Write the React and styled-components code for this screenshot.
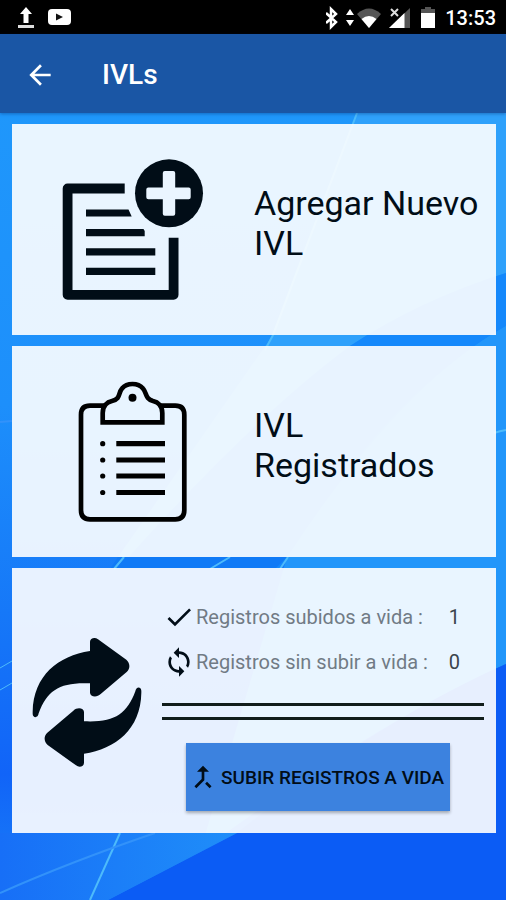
import React from "react";
import styled, { createGlobalStyle } from "styled-components";
import { MdArrowBack, MdCallMerge, MdCheck, MdSync } from "react-icons/md";

const INK = "#010d17";

const GlobalStyle = createGlobalStyle`
  * {
    box-sizing: border-box;
  }

  body {
    margin: 0;
    background: #0b5cf5;
    font-family: Roboto, "Liberation Sans", sans-serif;
  }
`;

const Page = styled.div`
  position: relative;
  z-index: 0;
  min-height: 100vh;
  display: flex;
  flex-direction: column;
`;

const WallpaperSvg = styled.svg`
  position: absolute;
  inset: 0;
  z-index: -1;
  width: 100%;
  height: 100%;
`;

const StatusBar = styled.div`
  display: flex;
  align-items: center;
  justify-content: space-between;
  height: 34px;
  padding: 2px 10px 0 16px;
  background: #000;
  color: #fff;
`;

const StatusGroup = styled.div`
  display: flex;
  align-items: center;
  gap: ${(props) => props.$gap};
`;

const Clock = styled.span`
  font-size: 20px;
  font-weight: 500;
  line-height: 24px;
`;

const Toolbar = styled.header`
  display: flex;
  align-items: center;
  gap: 46px;
  height: 79px;
  padding: 2px 24px 0;
  background: #1a56a5;
  color: #fff;
  box-shadow: 0 1px 3px rgba(0, 40, 110, 0.4);
`;

const BackButton = styled.button`
  display: flex;
  padding: 0;
  border: 0;
  background: none;
  color: inherit;
  font-size: 32px;
`;

const Title = styled.h1`
  margin: 0;
  font-size: 28px;
  font-weight: 500;
  line-height: 32px;
`;

const Content = styled.main`
  display: flex;
  flex-direction: column;
  gap: 11px;
  padding: 11px 10px 11px 12px;
`;

const MenuCard = styled.button`
  display: grid;
  grid-template-columns: 1fr 1fr;
  align-items: center;
  min-height: 211px;
  padding: 0;
  border: 0;
  background: rgba(255, 255, 255, 0.9);
  color: ${INK};
  font-family: inherit;
  text-align: left;
`;

const CardIcon = styled.span`
  display: flex;
  align-items: center;
  justify-content: center;
`;

const CardLabel = styled.span`
  padding: 0 16px 14px 0;
  font-size: 34px;
  line-height: 40px;
`;

const SyncCard = styled.section`
  display: grid;
  grid-template-columns: 150px 1fr;
  padding: 26px 12px 22px 0;
  background: rgba(255, 255, 255, 0.9);
  color: ${INK};
`;

const Stats = styled.dl`
  margin: 0;
`;

const StatRow = styled.div`
  display: flex;
  align-items: center;
  height: 45px;
  padding: 0 24px 0 1px;
  font-size: 20px;

  svg {
    font-size: 32px;
  }
`;

const StatLabel = styled.dt`
  flex: 1;
  margin-left: 1px;
  color: #717b85;
`;

const StatValue = styled.dd`
  margin: 0;
  color: #3b444c;
`;

const Divider = styled.div`
  height: 17px;
  margin: 19px 0 23px;
  border: solid #111d1b;
  border-width: 3px 0;
`;

const UploadButton = styled.button`
  display: flex;
  align-items: center;
  width: 264px;
  height: 68px;
  margin-left: 24px;
  padding: 0 0 0 1px;
  border: 0;
  background: #3c82df;
  box-shadow: 0 2px 3px rgba(0, 0, 0, 0.3);
  color: ${INK};
  font-family: inherit;
  font-size: 19px;
  font-weight: 500;
  white-space: nowrap;

  svg {
    flex: none;
    margin-right: 2px;
    font-size: 32px;
  }
`;

const Wallpaper = () => (
  <WallpaperSvg viewBox="0 0 506 900" preserveAspectRatio="none" aria-hidden="true">
    <defs>
      <linearGradient id="sky" x1="0" y1="0" x2="0" y2="1">
        <stop offset="0.12" stopColor="#1f97fb" />
        <stop offset="0.45" stopColor="#1d8ffb" />
        <stop offset="0.68" stopColor="#1678f8" />
        <stop offset="0.86" stopColor="#1164f8" />
        <stop offset="1" stopColor="#1a80f7" />
      </linearGradient>
      <linearGradient id="wing" x1="0" y1="0" x2="1" y2="0">
        <stop offset="0" stopColor="#176ff7" />
        <stop offset="1" stopColor="#1f8ef9" />
      </linearGradient>
    </defs>
    <rect width="506" height="900" fill="url(#sky)" />
    <path d="M357 113H506V273Q420 300 350 346Q300 385 210 557H118L273 335Z" fill="#2fa1fb" />
    <path d="M506 273Q420 300 350 346Q250 420 118 569H280Q380 400 506 326Z" fill="#1588fb" />
    <path d="M118 557H287L275 569H110Z" fill="#107af6" />
    <path d="M506 326Q400 385 287 557L200 852Q380 720 506 664Z" fill="#2296fa" />
    <path d="M506 664Q380 720 237 833L108 900H506Z" fill="#0b5cf5" />
    <path d="M0 833H237L108 900H0Z" fill="url(#wing)" />
    <g fill="none" stroke="#4dbbfb" strokeWidth="2">
      <path d="M357 113L273 335L265 350" />
      <path d="M124 557L114 569M230 557L210 569M288 557L280 569" />
      <path d="M120 833L90 900" />
      <path d="M506 430Q500 431 494 433" />
      <path d="M0 668L12 661M0 690L12 683" strokeWidth="1" />
      <path d="M0 893Q70 862 155 833M0 422L12 421" stroke="#3292fa" />
    </g>
  </WallpaperSvg>
);

const UploadedIcon = () => (
  <svg width="20" height="24" viewBox="0 0 20 24" fill="#fff">
    <path d="M10 1l6 7h-3.500v9h-5V8H4z" />
    <path d="M2 19h16v3H2z" fill="#ddd" />
  </svg>
);

const VideoIcon = () => (
  <svg width="24" height="24" viewBox="0 0 24 24">
    <rect x="1" y="3" width="23" height="16" rx="4" fill="#fff" />
    <path d="M9 7.500l7 3.500l-7 3.500z" fill="#111" />
  </svg>
);

const StatusIcons = () => (
  <svg width="116" height="24" viewBox="0 0 116 24">
    <path d="M0 7l10 9l-5 5V3l5 5L0 17" fill="none" stroke="#fff" strokeWidth="2.500" />
    <path d="M24 3l4 6h-8zM24 20l4-6h-8z" fill="#fff" />
    <path d="M31 8Q43-3 55 8L43 22z" fill="#555" />
    <path d="M35.500 13Q43 7 50.500 13L43 22z" fill="#fff" />
    <path d="M63 22L84 2v20z" fill="#555" />
    <path d="M63 22L78.500 7v15z" fill="#fff" />
    <path d="M65 3l7 7M72 3l-7 7" stroke="#ddd" strokeWidth="2" />
    <path d="M99 1h6v2h4v5H95V3h4z" fill="#555" />
    <rect x="95" y="7" width="14" height="15" fill="#fff" />
  </svg>
);

const NewDocumentIcon = () => (
  <svg width="142" height="142" viewBox="62 159 142 142" fill={INK}>
    <path
      d="M124.700 188.500H67.600V294.800H173.600V237.700"
      fill="none"
      stroke={INK}
      strokeWidth="9.800"
      strokeLinejoin="round"
    />
    <path d="M86 209.500h42.500l3.200 7H86zM86 229h57.500l1.200 2v5.300H86zM86 248.300h69.300v7.200H86zM86 267.700h69.300v7.200H86z" />
    <circle cx="169" cy="193.300" r="34" />
    <path
      d="M164.800 171h8.400q2 0 2 2v14.500h13.500q2 0 2 2v7.700q0 2-2 2h-13.500v14.500q0 2-2 2h-8.400q-2 0-2-2v-14.500h-14.500q-2 0-2-2v-7.700q0-2 2-2h14.500V173q0-2 2-2z"
      fill="#eaf5ff"
    />
  </svg>
);

const ClipboardIcon = () => (
  <svg width="142" height="142" viewBox="62 381 142 142" fill="#000">
    <g fill="none" stroke="#000" strokeWidth="4.700">
      <path d="M104 405.700H90q-9 0-9 9V510.300q0 9 9 9h85.300q9 0 9-9V414.700q0-9-9-9H161" />
      <path d="M102.700 422.300V413C102.700 406 107 402 112 401C121 399 118 393 122 388.500C127 382.500 138 382.500 143 388.500C147 393 145 399 153 401C158 402 162.300 406 162.300 413V422.300Z" />
    </g>
    <circle cx="132.500" cy="397.700" r="4" />
    {[443.7, 460, 476, 492.5].map((y) => (
      <g key={y}>
        <circle cx="102.700" cy={y} r="2.600" />
        <path d={`M116.300 ${y}H165`} stroke="#000" strokeWidth="5.200" />
      </g>
    ))}
  </svg>
);

const RefreshArrow = ({ transform }) => (
  <path
    transform={transform}
    d="M68 302C70 192 145 134 240 119V92C240 81 254 76 264 84L349 145C361 155 361 173 350 182L272 248C260 260 240 256 240 244V216C150 212 112 236 86 306C84 321 69 321 68 308Z"
  />
);

const RefreshIcon = () => (
  <svg width="110" height="129" viewBox="66 80 330 387" fill={INK}>
    <RefreshArrow />
    <RefreshArrow transform="rotate(180 231 273)" />
  </svg>
);

const menu = [
  { label: "Agregar Nuevo IVL", Icon: NewDocumentIcon },
  { label: "IVL Registrados", Icon: ClipboardIcon },
];

const stats = [
  { label: "Registros subidos a vida :", value: 1, Icon: MdCheck },
  { label: "Registros sin subir a vida :", value: 0, Icon: MdSync },
];

const App = () => {
  return (
    <>
      <GlobalStyle />
      <Page>
        <Wallpaper />
        <StatusBar>
          <StatusGroup $gap="11px">
            <UploadedIcon />
            <VideoIcon />
          </StatusGroup>
          <StatusGroup $gap="3px">
            <StatusIcons />
            <Clock>13:53</Clock>
          </StatusGroup>
        </StatusBar>
        <Toolbar>
          <BackButton aria-label="Volver">
            <MdArrowBack />
          </BackButton>
          <Title>IVLs</Title>
        </Toolbar>
        <Content>
          {menu.map(({ label, Icon }) => (
            <MenuCard key={label}>
              <CardIcon>
                <Icon />
              </CardIcon>
              <CardLabel>{label}</CardLabel>
            </MenuCard>
          ))}
          <SyncCard>
            <CardIcon>
              <RefreshIcon />
            </CardIcon>
            <div>
              <Stats>
                {stats.map(({ label, value, Icon }) => (
                  <StatRow key={label}>
                    <Icon />
                    <StatLabel>{label}</StatLabel>
                    <StatValue>{value}</StatValue>
                  </StatRow>
                ))}
              </Stats>
              <Divider />
              <UploadButton>
                <MdCallMerge />
                SUBIR REGISTROS A VIDA
              </UploadButton>
            </div>
          </SyncCard>
        </Content>
      </Page>
    </>
  );
};

export default App;
